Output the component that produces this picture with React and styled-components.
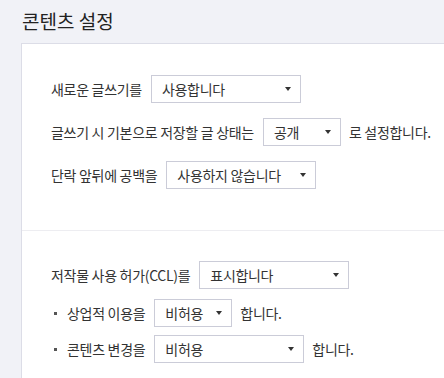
import React from "react";
import styled, { createGlobalStyle } from "styled-components";

const Global = createGlobalStyle`
  html, body { margin: 0; padding: 0; background: #f1f2f7; overflow: hidden; }
  body { font-family: "Noto Sans CJK KR", "Noto Sans", sans-serif; color: #333; }
`;

const Page = styled.div`
  padding-left: 21px;
  width: 900px;
`;

const Title = styled.h2`
  margin: 9px 0 10px 1px;
  font-size: 19px;
  line-height: 24px;
  font-weight: 400;
  color: #222;
  letter-spacing: 0;
`;

const Panel = styled.div`
  background: #fff;
  border: 1px solid #dcdde7;
  width: 700px;
  height: 400px;
`;

const Section = styled.div`
  padding: ${(p) => p.$top}px 0 ${(p) => p.$bottom}px 29px;
  border-top: ${(p) => (p.$divider ? "1px solid #ededf1" : "none")};
  display: flex;
  flex-direction: column;
`;

const Row = styled.div`
  display: flex;
  align-items: center;
  height: 28px;
  margin-top: ${(p) => p.$mt || 0}px;
  font-size: 14px;
  letter-spacing: -0.3px;
  white-space: nowrap;
`;

const Label = styled.span`
  margin-right: 9px;
`;

const Bullet = styled.span`
  display: inline-block;
  width: 3px;
  height: 3px;
  background: #555;
  margin: 0 10px 0 3px;
`;

const Select = styled.div`
  box-sizing: border-box;
  width: ${(p) => p.$w}px;
  height: 28px;
  border: 1px solid #cbccd8;
  background: #fff;
  display: flex;
  align-items: center;
  justify-content: space-between;
  padding: 0 9px 0 10px;
  margin-right: 8px;
  color: #333;
`;

const Arrow = styled.span`
  width: 0;
  height: 0;
  border-left: 3.5px solid transparent;
  border-right: 3.5px solid transparent;
  border-top: 4px solid #333;
`;

const Dropdown = ({ w, children }) => (
  <Select $w={w}>
    <span>{children}</span>
    <Arrow />
  </Select>
);

export default function App() {
  return (
    <Page>
      <Global />
      <Title>콘텐츠 설정</Title>
      <Panel>
        <Section $top={31} $bottom={41}>
          <Row>
            <Label>새로운 글쓰기를</Label>
            <Dropdown w={150}>사용합니다</Dropdown>
          </Row>
          <Row $mt={15}>
            <Label>글쓰기 시 기본으로 저장할 글 상태는</Label>
            <Dropdown w={78}>공개</Dropdown>
            <span>로 설정합니다.</span>
          </Row>
          <Row $mt={15}>
            <Label>단락 앞뒤에 공백을</Label>
            <Dropdown w={150}>사용하지 않습니다</Dropdown>
          </Row>
        </Section>
        <Section $divider $top={30} $bottom={0}>
          <Row>
            <Label>저작물 사용 허가(CCL)를</Label>
            <Dropdown w={150}>표시합니다</Dropdown>
          </Row>
          <Row $mt={10}>
            <Bullet />
            <Label>상업적 이용을</Label>
            <Dropdown w={78}>비허용</Dropdown>
            <span>합니다.</span>
          </Row>
          <Row $mt={8}>
            <Bullet />
            <Label>콘텐츠 변경을</Label>
            <Dropdown w={150}>비허용</Dropdown>
            <span>합니다.</span>
          </Row>
        </Section>
      </Panel>
    </Page>
  );
}
